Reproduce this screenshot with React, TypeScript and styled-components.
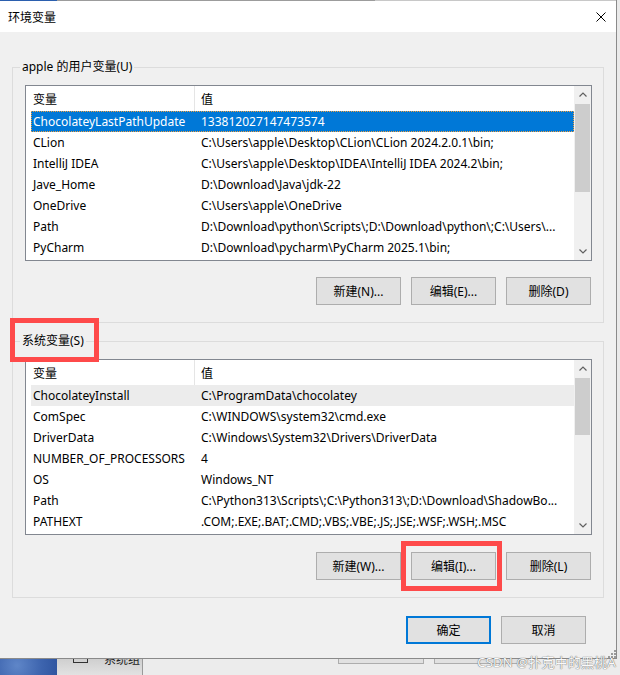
import React from 'react';
import styled, { createGlobalStyle } from 'styled-components';

const GlobalStyle = createGlobalStyle`
  html, body { margin: 0; padding: 0; }
  body {
    width: 620px; height: 675px; overflow: hidden; background: #f0f0f0;
    font-family: "Noto Sans", "Noto Sans CJK SC", sans-serif;
    font-size: 12px; color: #000;
  }
  * { box-sizing: border-box; }
`;

const Screen = styled.div`
  width: 620px; height: 675px; display: flex; flex-direction: column; overflow: hidden; position: relative;
`;

const WindowRow = styled.div`
  display: flex; height: 659px; background: #eaeaea;
`;

const Dialog = styled.div`
  width: 617px; height: 659px; display: flex; flex-direction: column;
  background: #f0f0f0; border-right: 1px solid #8a8a8a; border-bottom: 1px solid #8a8a8a;
`;

const TopEdge = styled.div`
  height: 1px; background: linear-gradient(to right, #2b5fae 0, #2b5fae 57px, #9c9c9c 57px, #9c9c9c 375px, #c8c8c8 375px);
`;

const TitleBar = styled.div`
  height: 31px; background: #fff; display: flex; align-items: center; justify-content: space-between;
  padding: 0 10px 0 8px;
`;

const Title = styled.span`
  font-family: "Noto Sans CJK SC", sans-serif; font-size: 12px; line-height: 16px; margin-top: 1px;
`;

const CloseIcon = styled.svg`
  width: 10px; height: 10px; display: block; margin-top: 1px;
`;

const Body = styled.div`
  flex: 1; display: flex; flex-direction: column; padding: 27px 12px 0 12px;
`;

const Group = styled.fieldset<{ $gap?: number }>`
  margin: ${(p) => p.$gap ?? 0}px 0 0 0; padding: 0; border: 1px solid #dcdcdc; min-width: 0;
`;

const Legend = styled.legend`
  margin-left: 7px; padding: 0 2px; font-size: 12px; line-height: 16px;
  font-family: "Noto Sans", "Noto Sans CJK SC", sans-serif;
`;

const GroupInner = styled.div<{ $gap: number; $top: number }>`
  display: flex; flex-direction: column; gap: ${(p) => p.$gap}px;
  padding: ${(p) => p.$top}px 11px 17px 12px;
`;

const Marked = styled.span<{ $l: number; $t: number; $r: number; $b: number }>`
  position: relative; display: inline-block;
  &::after {
    content: ""; position: absolute; pointer-events: none;
    left: ${(p) => p.$l}px; top: ${(p) => p.$t}px; right: ${(p) => p.$r}px; bottom: ${(p) => p.$b}px;
    border: 5px solid #fe4a4a;
  }
`;

const ListBox = styled.div`
  display: flex; height: 176px; border: 1px solid #828790; background: #fff;
`;

const ListMain = styled.div`
  flex: 1; display: flex; flex-direction: column; min-width: 0;
`;

const Header = styled.div`
  height: 25px; display: flex; align-items: center; flex: none;
`;

const HeaderCell = styled.div<{ $w?: number; $pad: number }>`
  ${(p) => (p.$w ? `width: ${p.$w}px; flex: none; border-right: 1px solid #e5e5e5;` : 'flex: 1;')}
  height: 25px; display: flex; align-items: center; padding-left: ${(p) => p.$pad}px;
  font-family: "Noto Sans CJK SC", sans-serif;
`;

const Rows = styled.div`
  display: flex; flex-direction: column; padding-left: 5px;
`;

const Row = styled.div<{ $state?: 'active' | 'inactive' }>`
  height: 21px; display: flex; align-items: center; white-space: nowrap;
  background: ${(p) => (p.$state === 'active' ? '#0078d7' : p.$state === 'inactive' ? '#ececec' : 'transparent')};
  color: ${(p) => (p.$state === 'active' ? '#fff' : '#000')};
  border: 1px dotted ${(p) => (p.$state === 'active' ? '#f0a040' : 'transparent')};
`;

const Cell = styled.div<{ $w?: number }>`
  ${(p) => (p.$w ? `width: ${p.$w}px; flex: none;` : 'flex: 1;')}
  padding-left: 1px; overflow: hidden; line-height: 19px;
`;

const ScrollBar = styled.div`
  width: 17px; flex: none; background: #f0f0f0; display: flex; flex-direction: column;
`;

const Arrow = styled.div`
  height: 17px; flex: none; display: flex; align-items: center; justify-content: center;
`;

const Track = styled.div`
  flex: 1; padding: 0 1px;
`;

const Thumb = styled.div`
  background: #cdcdcd;
`;

const ButtonRow = styled.div`
  display: flex; justify-content: flex-end; gap: 10px; padding-right: 1px;
`;

const Button = styled.button<{ $default?: boolean }>`
  width: 85px; height: 28px; margin: 0; padding: 0;
  background: #e1e1e1; border: ${(p) => (p.$default ? '2px solid #0078d7' : '1px solid #adadad')};
  font-family: "Noto Sans", "Noto Sans CJK SC", sans-serif; font-size: 12px; color: #000;
  display: flex; align-items: center; justify-content: center;
`;

const Footer = styled.div`
  display: flex; justify-content: flex-end; gap: 10px; margin-top: 18px; padding-right: 18px;
`;

const Grip = styled.svg`
  position: absolute; left: 608px; top: 650px; width: 8px; height: 8px;
`;

const Desk = styled.div`
  flex: 1; display: flex; overflow: hidden;
  box-shadow: inset 0 3px 3px -2px rgba(0, 0, 0, 0.25);
`;

const Wallpaper = styled.div`
  width: 57px; flex: none;
  background: radial-gradient(circle at 30% 40%, #5f86c8 0, #3d64ae 60%, #2f55a0 100%);
`;

const Launcher = styled.div`
  width: 86px; flex: none; display: flex; align-items: flex-start; gap: 16px; padding-left: 16px;
  background: linear-gradient(to bottom, #cfcfcf, #e2e2e2); border-right: 1px solid #9a9a9a;
`;

const LauncherIcon = styled.div`
  width: 15px; height: 4px; border: 1px solid #333; border-top: none; flex: none;
`;

const LauncherText = styled.span`
  font-family: "Noto Sans CJK SC", sans-serif; font-size: 12px; line-height: 14px; margin-top: -7px; color: #222;
`;

const DeskRest = styled.div`
  flex: 1; display: flex; gap: 10px; padding-left: 195px; background: #ececec;
`;

const GhostButton = styled.div`
  width: 86px; height: 5px; border: 1px solid #adadad; border-top: none; background: #e1e1e1;
`;

const Watermark = styled.span`
  position: absolute; right: 4px; bottom: 6px; font-size: 13px; line-height: 14px;
  font-family: "Noto Sans", "Noto Sans CJK SC", sans-serif; color: #fafafa; letter-spacing: 0.2px;
  text-shadow: 0 0 1px #6a6a6a, 0 0 1px #6a6a6a;
`;

type Pair = [string, string];

const userVars: Pair[] = [
  ['ChocolateyLastPathUpdate', '133812027147473574'],
  ['CLion', 'C:\\Users\\apple\\Desktop\\CLion\\CLion 2024.2.0.1\\bin;'],
  ['IntelliJ IDEA', 'C:\\Users\\apple\\Desktop\\IDEA\\IntelliJ IDEA 2024.2\\bin;'],
  ['Jave_Home', 'D:\\Download\\Java\\jdk-22'],
  ['OneDrive', 'C:\\Users\\apple\\OneDrive'],
  ['Path', 'D:\\Download\\python\\Scripts\\;D:\\Download\\python\\;C:\\Users\\...'],
  ['PyCharm', 'D:\\Download\\pycharm\\PyCharm 2025.1\\bin;'],
];

const sysVars: Pair[] = [
  ['ChocolateyInstall', 'C:\\ProgramData\\chocolatey'],
  ['ComSpec', 'C:\\WINDOWS\\system32\\cmd.exe'],
  ['DriverData', 'C:\\Windows\\System32\\Drivers\\DriverData'],
  ['NUMBER_OF_PROCESSORS', '4'],
  ['OS', 'Windows_NT'],
  ['Path', 'C:\\Python313\\Scripts\\;C:\\Python313\\;D:\\Download\\ShadowBo...'],
  ['PATHEXT', '.COM;.EXE;.BAT;.CMD;.VBS;.VBE;.JS;.JSE;.WSF;.WSH;.MSC'],
];

const Chevron = ({ up }: { up?: boolean }) => (
  <svg width="8" height="5" viewBox="0 0 8 5">
    <polyline
      points={up ? '0.5,4.5 4,1 7.5,4.5' : '0.5,0.5 4,4 7.5,0.5'}
      fill="none"
      stroke="#606060"
      strokeWidth="1.2"
    />
  </svg>
);

const VarList = ({
  rows,
  selected,
  thumbTop,
  thumbSize,
}: {
  rows: Pair[];
  selected: 'active' | 'inactive';
  thumbTop: number;
  thumbSize: number;
}) => (
  <ListBox>
    <ListMain>
      <Header>
        <HeaderCell $w={169} $pad={7}>变量</HeaderCell>
        <HeaderCell $pad={6}>值</HeaderCell>
      </Header>
      <Rows>
        {rows.map(([k, v], i) => (
          <Row key={k + i} $state={i === 0 ? selected : undefined}>
            <Cell $w={168}>{k}</Cell>
            <Cell>{v}</Cell>
          </Row>
        ))}
      </Rows>
    </ListMain>
    <ScrollBar>
      <Arrow>
        <Chevron up />
      </Arrow>
      <Track>
        <Thumb style={{ marginTop: thumbTop, height: thumbSize }} />
      </Track>
      <Arrow>
        <Chevron />
      </Arrow>
    </ScrollBar>
  </ListBox>
);

export default function App() {
  return (
    <>
      <GlobalStyle />
      <Screen>
        <WindowRow>
          <Dialog>
            <TopEdge />
            <TitleBar>
              <Title>环境变量</Title>
              <CloseIcon viewBox="0 0 10 10">
                <path d="M0.5 0.5 L9.5 9.5 M9.5 0.5 L0.5 9.5" stroke="#000" strokeWidth="1" fill="none" />
              </CloseIcon>
            </TitleBar>
            <Body>
              <Group>
                <Legend>apple 的用户变量(U)</Legend>
                <GroupInner $gap={16} $top={10}>
                  <VarList rows={userVars} selected="active" thumbTop={1} thumbSize={88} />
                  <ButtonRow>
                    <Button>新建(N)...</Button>
                    <Button>编辑(E)...</Button>
                    <Button>删除(D)</Button>
                  </ButtonRow>
                </GroupInner>
              </Group>
              <Group $gap={10}>
                <Legend>
                  <Marked $l={-12} $t={-15} $r={-15} $b={-13}>系统变量(S)</Marked>
                </Legend>
                <GroupInner $gap={17} $top={10}>
                  <VarList rows={sysVars} selected="inactive" thumbTop={1} thumbSize={57} />
                  <ButtonRow>
                    <Button>新建(W)...</Button>
                    <Marked $l={-10} $t={-11} $r={-6} $b={-11}>
                      <Button>编辑(I)...</Button>
                    </Marked>
                    <Button>删除(L)</Button>
                  </ButtonRow>
                </GroupInner>
              </Group>
              <Footer>
                <Button $default>确定</Button>
                <Button>取消</Button>
              </Footer>
            </Body>
          </Dialog>
        </WindowRow>
        <Desk>
          <Wallpaper />
          <Launcher>
            <LauncherIcon />
            <LauncherText>系统组</LauncherText>
          </Launcher>
          <DeskRest>
            <GhostButton />
            <GhostButton />
          </DeskRest>
        </Desk>
        <Grip viewBox="0 0 8 8">
          <g fill="#9a9a9a">
            <rect x="6" y="0" width="2" height="2" />
            <rect x="3" y="3" width="2" height="2" />
            <rect x="6" y="3" width="2" height="2" />
            <rect x="0" y="6" width="2" height="2" />
            <rect x="3" y="6" width="2" height="2" />
            <rect x="6" y="6" width="2" height="2" />
          </g>
        </Grip>
        <Watermark>CSDN @扑克中的黑桃A</Watermark>
      </Screen>
    </>
  );
}
